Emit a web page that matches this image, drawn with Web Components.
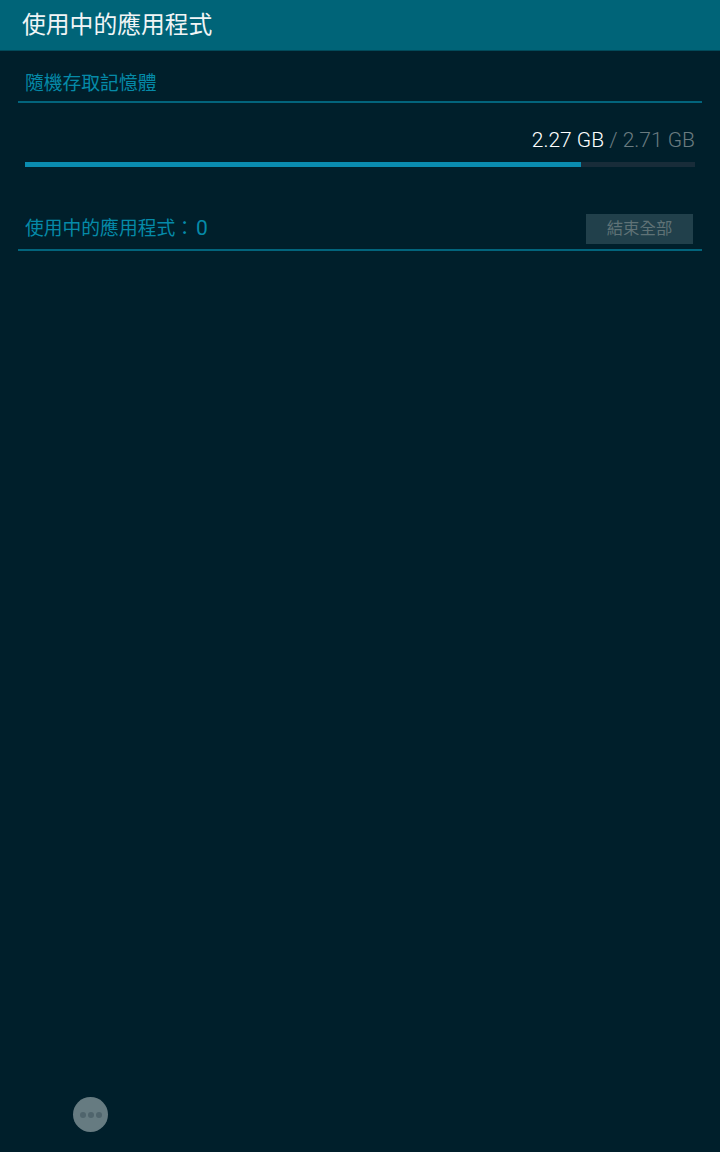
<!DOCTYPE html>
<html lang="zh-Hant">
<head>
<meta charset="utf-8">
<title>使用中的應用程式</title>
<style>
  html, body { margin: 0; height: 100%; }
  body {
    width: 720px;
    height: 1152px;
    overflow: hidden;
    background: #001f2b;
    font-family: Roboto, "Noto Sans CJK TC", sans-serif;
  }
</style>
</head>
<body>
<task-screen>
  <app-bar>使用中的應用程式</app-bar>
  <section-head>隨機存取記憶體</section-head>
  <ram-meter used="2.27 GB" total="2.71 GB" percent="83"></ram-meter>
  <section-head top="11" action="結束全部">使用中的應用程式：<span style="font-size:21px;margin-left:2px">0</span></section-head>
  <float-dots></float-dots>
</task-screen>

<script>
class TaskScreen extends HTMLElement {
  constructor() {
    super();
    this.attachShadow({ mode: "open" });
    this.shadowRoot.innerHTML = `
      <style>
        :host { display: block; position: relative; width: 720px; height: 1152px; }
      </style>
      <slot></slot>`;
  }
}

class AppBar extends HTMLElement {
  constructor() {
    super();
    this.attachShadow({ mode: "open" });
    this.shadowRoot.innerHTML = `
      <style>
        :host {
          display: flex;
          align-items: center;
          box-sizing: border-box;
          height: 51px;
          padding: 2px 0 0 22px;
          background: #006478;
          border-bottom: 1px solid #024a5a;
          color: #f1f5f6;
          font: 23.8px/1 Roboto, "Noto Sans CJK TC", sans-serif;
        }
      </style>
      <slot></slot>`;
  }
}

class SectionHead extends HTMLElement {
  constructor() {
    super();
    this.attachShadow({ mode: "open" });
  }

  connectedCallback() {
    const action = this.getAttribute("action");
    const top = this.getAttribute("top") || "0";
    this.shadowRoot.innerHTML = `
      <style>
        :host {
          display: block;
          margin: ${top}px 18px 0;
          color: #058aa8;
          font: 18.8px/1 Roboto, "Noto Sans CJK TC", sans-serif;
        }
        .row {
          display: flex;
          align-items: center;
          justify-content: space-between;
          box-sizing: border-box;
          height: 52px;
          padding: 17px 9px 0 7px;
          border-bottom: 2px solid #02647c;
        }
        .row.has-action { height: 42px; padding-top: 0; }
        .row.has-action span { margin-bottom: 2px; }
        button {
          width: 107px;
          height: 30px;
          margin: 0;
          padding: 0;
          border: 0;
          background: #21404b;
          color: #5f7276;
          font: 16.4px/30px Roboto, "Noto Sans CJK TC", sans-serif;
        }
      </style>
      <div class="row ${action ? "has-action" : ""}">
        <span><slot></slot></span>
        ${action ? `<button>${action}</button>` : ""}
      </div>`;
  }
}

class RamMeter extends HTMLElement {
  constructor() {
    super();
    this.attachShadow({ mode: "open" });
  }

  connectedCallback() {
    this.shadowRoot.innerHTML = `
      <style>
        :host {
          display: block;
          padding: 25px 25px 0;
          height: 95px;
          box-sizing: border-box;
          font: 300 21px/24px Roboto, sans-serif;
        }
        .label { text-align: right; color: #6a7b80; }
        .used { color: #ffffff; font-weight: 350; }
        .track { height: 5px; margin-top: 10px; background: #182c39; }
        .fill { height: 100%; width: ${this.getAttribute("percent")}%; background: #0a8cb0; }
      </style>
      <div class="label"><span class="used">${this.getAttribute("used")}</span> / ${this.getAttribute("total")}</div>
      <div class="track"><div class="fill"></div></div>`;
  }
}

class FloatDots extends HTMLElement {
  constructor() {
    super();
    this.attachShadow({ mode: "open" });
    this.shadowRoot.innerHTML = `
      <style>
        :host {
          position: absolute;
          left: 73px;
          top: 1097px;
          display: flex;
          align-items: center;
          justify-content: center;
          gap: 2px;
          width: 35px;
          height: 35px;
          border-radius: 50%;
          background: #667b81;
        }
        i { width: 6px; height: 6px; border-radius: 50%; background: #4f646c; }
      </style>
      <i></i><i></i><i></i>`;
  }
}

customElements.define("task-screen", TaskScreen);
customElements.define("app-bar", AppBar);
customElements.define("section-head", SectionHead);
customElements.define("ram-meter", RamMeter);
customElements.define("float-dots", FloatDots);
</script>
</body>
</html>
